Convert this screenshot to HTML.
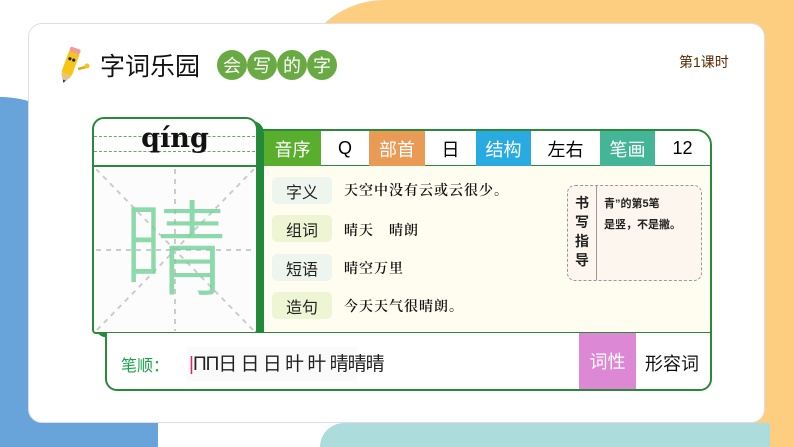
<!DOCTYPE html>
<html><head><meta charset="utf-8"><style>
*{margin:0;padding:0;box-sizing:border-box}
html,body{width:794px;height:447px;overflow:hidden}
body{background:#fff;font-family:"Liberation Sans","Noto Sans CJK SC",sans-serif}
#w{position:relative;width:794px;height:447px;overflow:hidden}
.abs{position:absolute}
.cell{position:absolute;top:0;height:35px;display:flex;align-items:center;justify-content:center;font-size:18px}
.lab{position:absolute;width:60px;height:27px;border-radius:5px;display:flex;align-items:center;justify-content:center;font-size:16px;color:#222}
.txt{position:absolute;font-size:14px;font-family:"Noto Serif CJK SC",serif;font-weight:600;color:#111;letter-spacing:1px}
</style></head><body><div id="w">
<div class="abs" style="left:295px;top:0;width:499px;height:100px;border-radius:90px 0 0 0;background:#fdce80"></div>
<div class="abs" style="left:740px;top:0;width:54px;height:447px;background:#fdce80"></div>
<div class="abs" style="left:0;top:97px;width:100px;height:350px;border-radius:0 100px 0 0;background:#68a4da"></div>
<div class="abs" style="left:0;top:380px;width:158px;height:67px;background:#68a4da"></div>
<div class="abs" style="left:320px;top:423px;width:450px;height:24px;border-radius:30px 0 0 0;background:#acdcdc"></div>
<div class="abs" style="left:28px;top:23px;width:737px;height:400px;background:#fff;border:1px solid #dde;border-radius:14px"></div>
<svg class="abs" style="left:56px;top:43px" width="36" height="42" viewBox="0 0 36 42">
<g transform="rotate(20 14 20)"><rect x="9" y="8" width="11" height="24" rx="2" fill="#f5c518"/><rect x="9" y="4" width="11" height="5" rx="2" fill="#f29a9a"/><polygon points="9,32 20,32 14.5,41" fill="#e8c08a"/><polygon points="13,38 16,38 14.5,41" fill="#333"/><circle cx="12.5" cy="16" r="1.6" fill="#222"/><circle cx="16.5" cy="16" r="1.6" fill="#222"/></g>
<path d="M22 26 L30 24" stroke="#e0a818" stroke-width="2.5"/><circle cx="31" cy="23" r="2.5" fill="#f5c518"/></svg>
<div class="abs" style="left:100px;top:47px;font-size:25px;color:#111">字词乐园</div>
<div class="abs" style="left:217px;top:50px;display:flex">
<span style="width:30px;height:30px;border-radius:50%;background:#6aaa44;color:#fff;font-size:18px;display:flex;align-items:center;justify-content:center">会</span>
<span style="width:30px;height:30px;border-radius:50%;background:#6aaa44;color:#fff;font-size:18px;display:flex;align-items:center;justify-content:center">写</span>
<span style="width:30px;height:30px;border-radius:50%;background:#6aaa44;color:#fff;font-size:18px;display:flex;align-items:center;justify-content:center">的</span>
<span style="width:30px;height:30px;border-radius:50%;background:#6aaa44;color:#fff;font-size:18px;display:flex;align-items:center;justify-content:center">字</span></div>
<div class="abs" style="left:679px;top:52px;font-size:14px;color:#5a2a00">第1课时</div>
<div class="abs" style="left:258px;top:129px;width:454px;height:205px;border:2px solid #2a8a3a;border-radius:0 16px 0 0;background:#fffdf0;overflow:hidden">
 <div class="abs" style="left:0;top:0;width:454px;height:35px;background:#fff;border-bottom:1px solid #2a8a3a"></div>
 <div class="cell" style="left:4px;width:57px;background:#5aae2e;color:#fff">音序</div>
 <div class="cell" style="left:61px;width:48px">Q</div>
 <div class="cell" style="left:109px;width:56px;background:#e99a55;color:#fff">部首</div>
 <div class="cell" style="left:165px;width:51px">日</div>
 <div class="cell" style="left:216px;width:55px;background:#29abe2;color:#fff">结构</div>
 <div class="cell" style="left:271px;width:69px">左右</div>
 <div class="cell" style="left:340px;width:55px;background:#44b596;color:#fff">笔画</div>
 <div class="cell" style="left:395px;width:55px">12</div>
 <div class="lab" style="left:12px;top:46px;background:#eef4ee">字义</div><div class="txt" style="left:84px;top:49px">天空中没有云或云很少。</div>
 <div class="lab" style="left:12px;top:84px;background:#eef5d5">组词</div><div class="txt" style="left:84px;top:89px">晴天　晴朗</div>
 <div class="lab" style="left:12px;top:123px;background:#eef4ee">短语</div><div class="txt" style="left:84px;top:127px">晴空万里</div>
 <div class="lab" style="left:12px;top:161px;background:#eef5d5">造句</div><div class="txt" style="left:84px;top:165px">今天天气很晴朗。</div>
 <div class="abs" style="left:307px;top:54px;width:135px;height:96px;border:1px dashed #999;border-radius:8px;background:#fdf6ee">
  <div class="abs" style="left:0;top:8px;width:28px;font-size:14px;line-height:19px;text-align:center;color:#222;font-weight:600">书<br>写<br>指<br>导</div>
  <div class="abs" style="left:28px;top:0;width:1px;height:94px;background:#999"></div>
  <div class="abs" style="left:36px;top:8px;font-size:11px;line-height:21px;color:#222;font-weight:600">青”的第5笔<br>是竖，不是撇。</div>
 </div>
</div>
<div class="abs" style="left:97px;top:121px;width:167px;height:216px;background:#1e8a3a;border-radius:12px 12px 4px 8px"></div>
<div class="abs" style="left:92px;top:117px;width:166px;height:217px;background:#fff;border:2px solid #2a8a3a;border-radius:12px 12px 4px 4px;overflow:hidden">
 <div class="abs" style="left:0;top:17px;width:166px;border-top:1px dashed #6a6"></div>
 <div class="abs" style="left:0;top:32px;width:166px;border-top:1px dashed #6a6"></div>
 <div class="abs" style="left:0;top:4px;width:162px;text-align:center;font-family:'DejaVu Serif',serif;font-weight:bold;font-size:27px;color:#111">qíng</div>
 <div class="abs" style="left:0;top:46px;width:166px;border-top:2px solid #2a8a3a"></div>
 <svg class="abs" style="left:2px;top:50px" width="158" height="162"><rect width="158" height="162" fill="#fcfcfc"/><g stroke="#ccc" stroke-width="2" stroke-dasharray="5 5"><line x1="0" y1="0" x2="158" y2="162"/><line x1="158" y1="0" x2="0" y2="162"/><line x1="79" y1="0" x2="79" y2="162"/><line x1="0" y1="81" x2="158" y2="81"/></g>
 <text x="79" y="118" text-anchor="middle" font-size="104" font-weight="300" fill="#6fd096" fill-opacity="0.8" font-family="Noto Sans CJK SC,sans-serif">晴</text></svg>
</div>
<div class="abs" style="left:105px;top:333px;width:607px;height:58px;border:2px solid #2a8a3a;border-top:none;border-radius:0 0 12px 12px;background:#fff;overflow:hidden">
 <div class="abs" style="left:14px;top:19px;font-size:16px;color:#1aa34a">笔顺：</div>
 <div class="abs" style="left:80px;top:14px;width:170px;height:34px;background:#fafafa"></div>
 <div class="abs" style="left:82px;top:16px;font-size:19px;color:#222;letter-spacing:-1px;white-space:nowrap"><span style="color:#e0206a">|</span>ПП日 日 日 旪 旪 晴晴晴</div>
 <div class="abs" style="left:472px;top:0;width:57px;height:56px;background:#dd88d4;color:#fff;font-size:18px;display:flex;align-items:center;justify-content:center">词性</div>
 <div class="abs" style="left:538px;top:17px;font-size:18px;color:#111">形容词</div>
</div>
</div></body></html>
